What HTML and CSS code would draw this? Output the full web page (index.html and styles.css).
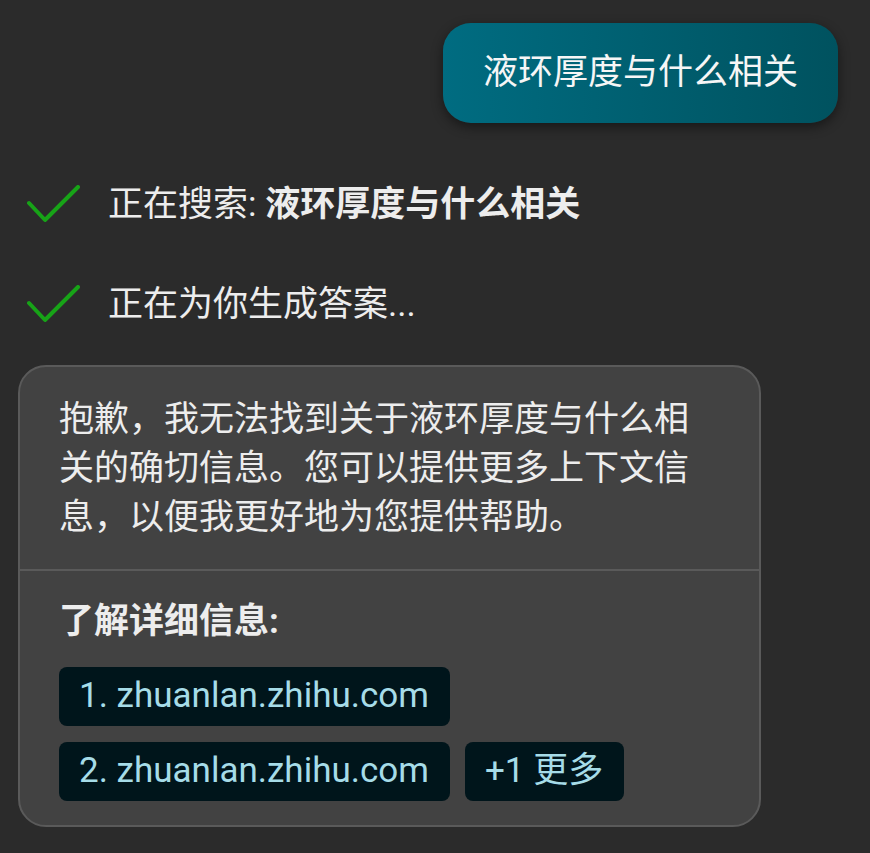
FILE: index.html
```html
<!DOCTYPE html>
<html lang="zh-CN">
<head>
    <meta charset="UTF-8">
    <meta name="viewport" content="width=device-width, initial-scale=1.0">
    <title>Chat</title>
    <link rel="stylesheet" href="styles.css">
</head>
<body>
    <div class="chat">
        <div class="user-row">
            <div class="user-bubble">液环厚度与什么相关</div>
        </div>

        <div class="status-row first">
            <svg class="check" width="54" height="40" viewBox="0 0 54 40">
                <polyline points="2,18 18,35 51,2" fill="none" stroke="#17a317" stroke-width="4" stroke-linecap="round" stroke-linejoin="round"/>
            </svg>
            <span>正在搜索: <b>液环厚度与什么相关</b></span>
        </div>
        <div class="status-row">
            <svg class="check" width="54" height="40" viewBox="0 0 54 40">
                <polyline points="2,18 18,35 51,2" fill="none" stroke="#17a317" stroke-width="4" stroke-linecap="round" stroke-linejoin="round"/>
            </svg>
            <span>正在为你生成答案...</span>
        </div>

        <div class="answer-card">
            <div class="answer-text">抱歉，我无法找到关于液环厚度与什么相关的确切信息。您可以提供更多上下文信息，以便我更好地为您提供帮助。</div>
            <div class="sources">
                <div class="sources-title">了解详细信息:</div>
                <div class="source-list">
                    <div class="source-row">
                        <span class="source-chip">1. zhuanlan.zhihu.com</span>
                    </div>
                    <div class="source-row">
                        <span class="source-chip">2. zhuanlan.zhihu.com</span>
                        <span class="source-chip">+1 更多</span>
                    </div>
                </div>
            </div>
        </div>
    </div>
</body>
</html>
```

FILE: styles.css
```css
body {
    margin: 0;
    background-color: #2b2b2b;
    font-family: Roboto, "Noto Sans CJK SC", sans-serif;
    font-size: 35px;
    color: #ededed;
}
.chat {
    display: flex;
    flex-direction: column;
    padding: 23px 32px 0 18px;
}
.user-row {
    display: flex;
    justify-content: flex-end;
}
.user-bubble {
    background: linear-gradient(to right, #006c81, #00525f);
    color: #f6f6f6;
    padding: 29px 40px;
    line-height: 42px;
    border-radius: 28px;
    box-shadow: 0 4px 12px rgba(0,0,0,0.45);
}
.status-row {
    display: flex;
    align-items: center;
    gap: 27px;
    padding-left: 9px;
    line-height: 49px;
    margin-top: 51px;
}
.status-row.first {
    margin-top: 57px;
}
.status-row b {
    font-weight: 700;
}
.check {
    flex-shrink: 0;
}
.answer-card {
    margin-top: 36px;
    width: 739px;
    background-color: #424242;
    border: 2px solid #5a5a5a;
    border-radius: 28px;
}
.answer-text {
    padding: 28px 39px 27px;
    line-height: 49px;
    border-bottom: 2px solid #5a5a5a;
}
.sources {
    padding: 26px 39px 24px;
}
.sources-title {
    font-weight: 700;
    line-height: 49px;
    margin-bottom: 21px;
}
.source-list {
    display: flex;
    flex-direction: column;
    gap: 16px;
}
.source-row {
    display: flex;
    gap: 15px;
}
.source-chip {
    background-color: #00151b;
    color: #a6dce8;
    padding: 8px 21px 9px 20px;
    line-height: 42px;
    border-radius: 8px;
}
```
